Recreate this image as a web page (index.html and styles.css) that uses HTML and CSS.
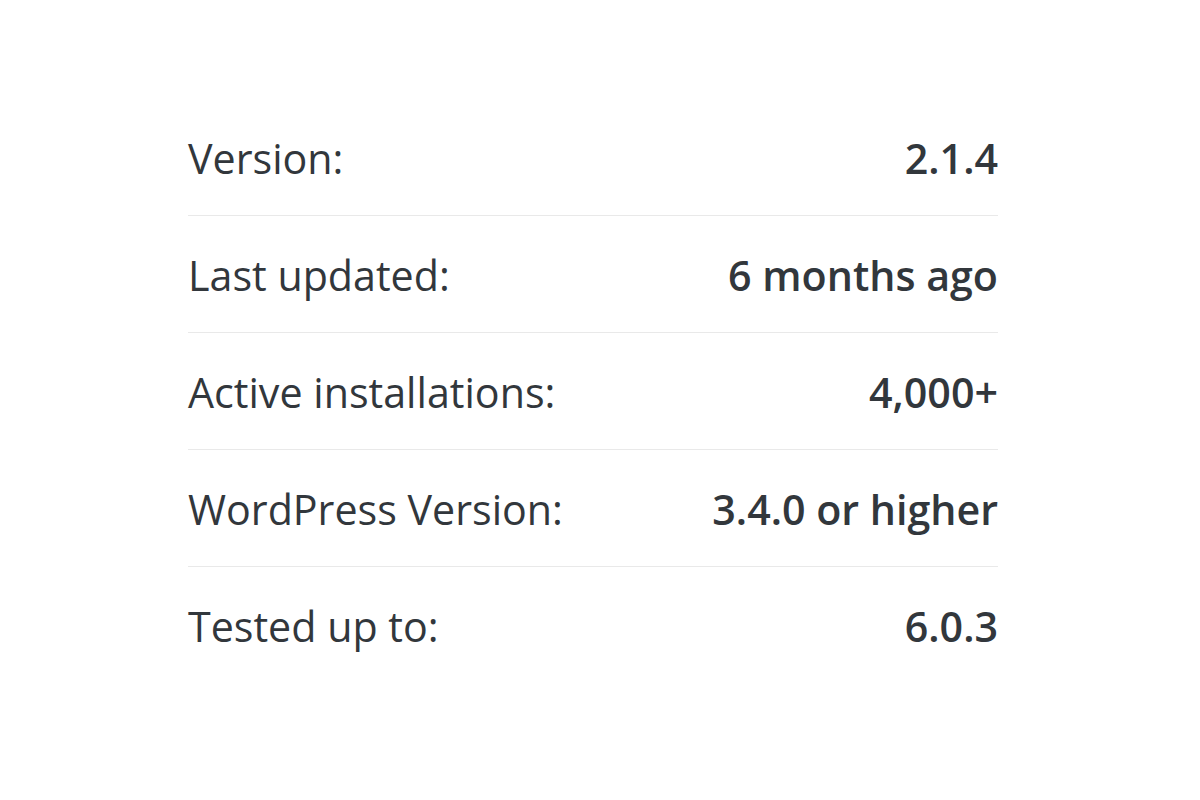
FILE: index.html
```html
<!DOCTYPE html>
<html>
<head>
<meta charset="utf-8">
<link rel="stylesheet" href="styles.css">
</head>
<body>
<ul class="meta">
  <li class="row"><span class="label">Version:</span><strong class="value">2.1.4</strong></li>
  <li class="row"><span class="label">Last updated:</span><strong class="value">6 months ago</strong></li>
  <li class="row"><span class="label">Active installations:</span><strong class="value">4,000+</strong></li>
  <li class="row"><span class="label">WordPress Version:</span><strong class="value">3.4.0 or higher</strong></li>
  <li class="row last"><span class="label">Tested up to:</span><strong class="value">6.0.3</strong></li>
</ul>
</body>
</html>
```
FILE: styles.css
```css
html, body {
  margin: 0;
  padding: 0;
  background: #ffffff;
}
body {
  font-family: "Open Sans", "Noto Sans", sans-serif;
  color: #32373c;
}
.meta {
  list-style: none;
  margin: 99px 0 0 188px;
  padding: 0;
  width: 810px;
}
.row {
  display: flex;
  justify-content: space-between;
  align-items: baseline;
  font-size: 41.2px;
  line-height: 56px;
  padding: 31px 0 29px;
  border-bottom: 1px solid #e9e9e9;
}
.row.last {
  border-bottom: none;
}
.label {
  font-weight: 400;
}
.value {
  font-weight: 600;
}
```
